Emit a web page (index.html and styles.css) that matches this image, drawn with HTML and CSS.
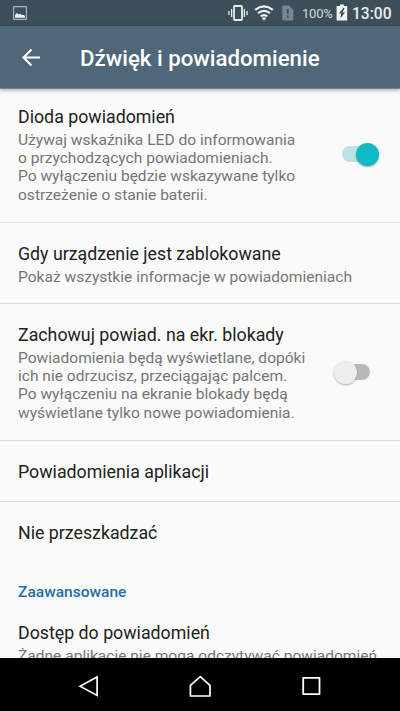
FILE: index.html
```html
<!DOCTYPE html>
<html lang="pl">
<head>
<meta charset="utf-8">
<title>Dźwięk i powiadomienie</title>
<link rel="stylesheet" href="styles.css">
</head>
<body>
<div class="status">
  <svg class="picture" width="14" height="14" viewBox="0 0 14 14"><rect x=".6" y=".6" width="12.8" height="12.8" rx=".6" fill="none" stroke="#aab4bb" stroke-width="1.2"/><path d="M2 11.8V9l2-2 2 1.6 1.3-.8 1.4 1.3 1.5-.4L12 10v1.8z" fill="#eef0f1"/></svg>
  <span class="spacer"></span>
  <svg class="vibrate" width="20" height="16" viewBox="0 0 20 16"><rect x="6" y="1" width="8" height="14" rx=".8" fill="none" stroke="#e9ecee" stroke-width="1.8"/><path d="M3.6 4v8M16.4 4v8M.9 6v4M19.1 6v4" stroke="#e9ecee" stroke-width="1.3"/></svg>
  <svg class="wifi" width="20" height="16" viewBox="0 0 20 16"><path d="M1.2 4.8Q10-2 18.8 4.8M4 8.2q6-4.6 12 0M6.7 11.4q3.3-2.5 6.6 0" fill="none" stroke="#f0f2f3" stroke-width="2.2"/><path d="M7.7 13q2.3-1.3 4.6 0L10 15.8z" fill="#f0f2f3"/></svg>
  <svg class="sim" width="12" height="16" viewBox="0 0 12 16"><path d="M1.5.5H7L11.3 5v9.5q0 1-1 1h-9q-1 0-1-1V1.5q0-1 1.2-1z" fill="#768791"/><path d="M5.8 4v5M5.8 10.5v2" stroke="#3d4f5b" stroke-width="1.8"/></svg>
  <span class="percent">100%</span>
  <svg class="battery" width="12" height="17" viewBox="0 0 12 17"><path d="M4 .4h4V2h3.2v14.5H.6V2H4z" fill="#f3f5f5"/><path d="M7.2 4L2.8 9.4h2.5L4.2 14.4l4.9-6H6.5L8.6 4z" fill="#3d4f5b"/></svg>
  <span class="clock">13:00</span>
</div>
<header class="appbar">
  <svg class="back" width="18" height="18" viewBox="0 0 18 18"><path d="M18 8.5H1.7M9.5.5L1.5 8.5l8 8" fill="none" stroke="#fff" stroke-width="2.1"/></svg>
  <h1>Dźwięk i powiadomienie</h1>
</header>
<main>
  <section class="item led">
    <div class="text">
      <h2>Dioda powiadomień</h2>
      <p>Używaj wskaźnika LED do informowania<br>o przychodzących powiadomieniach.<br>Po wyłączeniu będzie wskazywane tylko<br>ostrzeżenie o stanie baterii.</p>
    </div>
    <span class="switch on"><i class="thumb"></i></span>
  </section>
  <section class="item locked">
    <div class="text">
      <h2>Gdy urządzenie jest zablokowane</h2>
      <p>Pokaż wszystkie informacje w powiadomieniach</p>
    </div>
  </section>
  <section class="item keep">
    <div class="text">
      <h2>Zachowuj powiad. na ekr. blokady</h2>
      <p>Powiadomienia będą wyświetlane, dopóki<br>ich nie odrzucisz, przeciągając palcem.<br>Po wyłączeniu na ekranie blokady będą<br>wyświetlane tylko nowe powiadomienia.</p>
    </div>
    <span class="switch"><i class="thumb"></i></span>
  </section>
  <section class="item single"><h2>Powiadomienia aplikacji</h2></section>
  <section class="item single last"><h2>Nie przeszkadzać</h2></section>
  <h3>Zaawansowane</h3>
  <section class="item access">
    <div class="text">
      <h2>Dostęp do powiadomień</h2>
      <p>Żadne aplikacje nie mogą odczytywać powiadomień</p>
    </div>
  </section>
</main>
<nav>
  <svg width="24" height="24" viewBox="0 0 24 24"><path d="M20.1 3v18.4L3.1 12.3z" fill="none" stroke="#fff" stroke-width="1.7"/></svg>
  <svg width="24" height="24" viewBox="0 0 24 24"><path d="M2.4 22V11.4L12.3 2.7l9.7 8.7V22z" fill="none" stroke="#fff" stroke-width="1.7" stroke-linejoin="round"/></svg>
  <svg width="24" height="24" viewBox="0 0 24 24"><rect x="4.2" y="3.9" width="16.3" height="16.2" fill="none" stroke="#fff" stroke-width="1.8" stroke-linejoin="round"/></svg>
</nav>
</body>
</html>
```
FILE: styles.css
```css
* { box-sizing: border-box; }
body {
  margin: 0;
  height: 711px;
  overflow: hidden;
  display: flex;
  flex-direction: column;
  background: #fafafa;
  font-family: Roboto, "Noto Sans", sans-serif;
}
h1, h2, h3, p { margin: 0; white-space: nowrap; }
svg { display: block; flex: none; }

.status {
  flex: none;
  height: 26px;
  display: flex;
  align-items: center;
  padding: 0 9px 0 13px;
  background: #3d4f5b;
}
.spacer { flex: 1; }
.wifi { margin-left: 6px; }
.sim { margin-left: 8px; }
.percent { margin-left: 8px; width: 31px; font-size: 13px; letter-spacing: -.2px; color: #d5dadd; }
.battery { margin-left: 3px; margin-top: -1px; }
.clock { margin: 2px 0 0 4px; width: 39px; font-size: 15.6px; font-weight: 500; color: #eceeef; white-space: nowrap; }

.appbar {
  flex: none;
  height: 63px;
  display: flex;
  align-items: center;
  padding: 2px 22px 0;
  background: #506679;
  border-bottom: 1px solid #718493;
  box-shadow: 0 1px 4px rgba(0, 0, 0, .35);
  z-index: 1;
}
h1 { margin-left: 40px; font-size: 22.25px; font-weight: 500; line-height: 30px; color: #fff; }

main { flex: 1; min-height: 0; overflow: hidden; }
.item {
  display: flex;
  align-items: flex-start;
  justify-content: space-between;
  padding: 19px 18px 0;
  border-bottom: 1px solid #dcdcdc;
}
h2 { font-size: 17.78px; font-weight: 400; line-height: 24px; color: #212121; }
p { margin-top: 1.5px; font-size: 15.56px; line-height: 18.4px; color: #757575; }
.led { height: 134px; padding-top: 16px; }
.locked { height: 81px; }
.keep { height: 137px; }
.single { height: 61px; }
.last { border-bottom: 0; }
h3 { padding: 19px 18px 0; height: 52px; font-size: 15.56px; font-weight: 500; line-height: 20px; color: #1e6ea7; }
.access { padding-top: 6px; border-bottom: 0; }

.switch {
  flex: none;
  display: flex;
  align-items: center;
  width: 28px;
  height: 16px;
  margin: 41px 12px 0 0;
  border-radius: 8px;
  background: #b9b9b9;
}
.thumb {
  flex: none;
  width: 23px;
  height: 23px;
  margin-left: -8.5px;
  border-radius: 50%;
  background: #eceeed;
  box-shadow: 0 1px 2px rgba(0, 0, 0, .3);
}
.switch.on { background: #bbe3e7; }
.on .thumb { margin-left: 14px; background: #10b9c3; }

nav {
  flex: none;
  height: 53px;
  display: flex;
  align-items: center;
  justify-content: center;
  gap: 87px;
  padding-top: 3px;
  background: #000;
}
```
